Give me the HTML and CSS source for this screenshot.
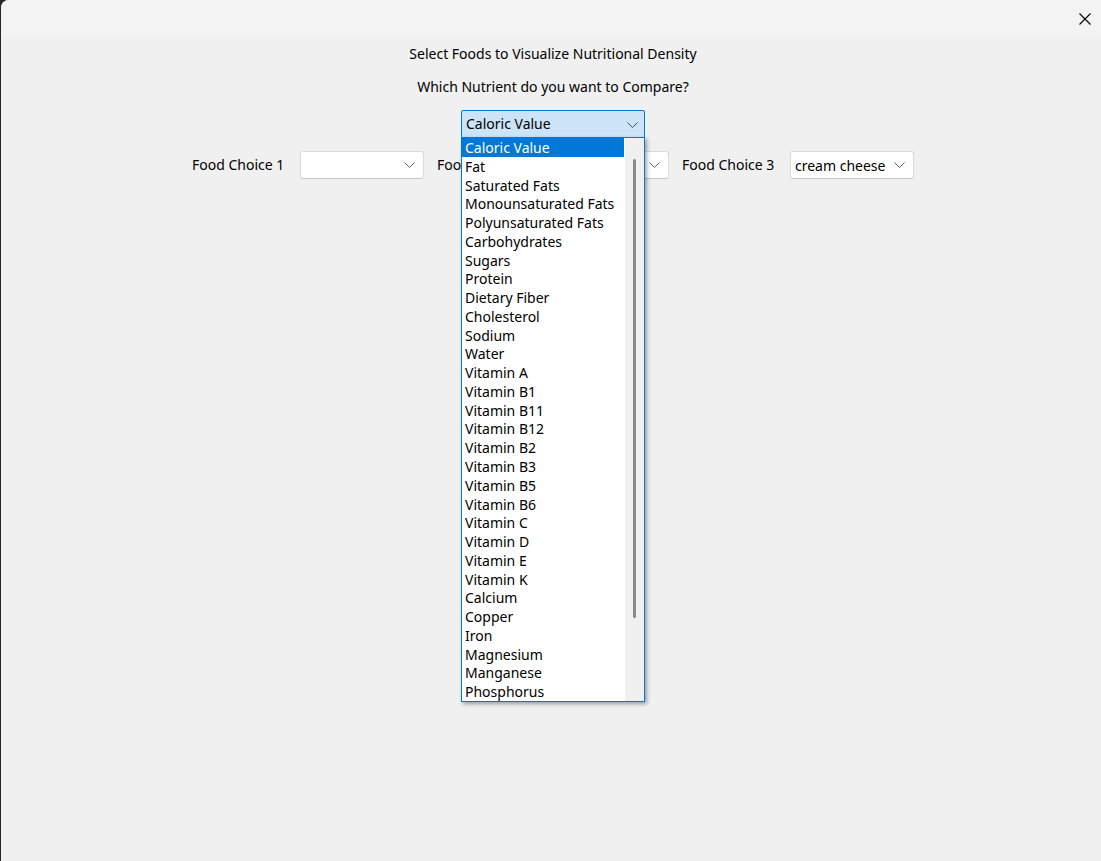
FILE: index.html
```html
<!DOCTYPE html>
<html>
<head>
<meta charset="utf-8">
<link rel="stylesheet" href="styles.css">
</head>
<body>
<div class="window">
  <div class="titlebar">
    <div class="close">
      <svg width="12" height="12" viewBox="0 0 12 12"><path d="M0.5 0.5 L11.5 11.5 M11.5 0.5 L0.5 11.5" stroke="#000" stroke-width="1.1" fill="none"/></svg>
    </div>
  </div>
  <div class="content">
    <div class="heading">Select Foods to Visualize Nutritional Density</div>
    <div class="question">Which Nutrient do you want to Compare?</div>
    <div class="nutrient">
      <span class="value">Caloric Value</span>
      <svg class="chev" width="11" height="6" viewBox="0 0 11 6"><path d="M0.5 0.5 L5.5 5.5 L10.5 0.5" stroke="#505050" stroke-width="1" fill="none"/></svg>
      <div class="list">
        <div class="items">
          <div class="item selected">Caloric Value</div>
          <div class="item">Fat</div>
          <div class="item">Saturated Fats</div>
          <div class="item">Monounsaturated Fats</div>
          <div class="item">Polyunsaturated Fats</div>
          <div class="item">Carbohydrates</div>
          <div class="item">Sugars</div>
          <div class="item">Protein</div>
          <div class="item">Dietary Fiber</div>
          <div class="item">Cholesterol</div>
          <div class="item">Sodium</div>
          <div class="item">Water</div>
          <div class="item">Vitamin A</div>
          <div class="item">Vitamin B1</div>
          <div class="item">Vitamin B11</div>
          <div class="item">Vitamin B12</div>
          <div class="item">Vitamin B2</div>
          <div class="item">Vitamin B3</div>
          <div class="item">Vitamin B5</div>
          <div class="item">Vitamin B6</div>
          <div class="item">Vitamin C</div>
          <div class="item">Vitamin D</div>
          <div class="item">Vitamin E</div>
          <div class="item">Vitamin K</div>
          <div class="item">Calcium</div>
          <div class="item">Copper</div>
          <div class="item">Iron</div>
          <div class="item">Magnesium</div>
          <div class="item">Manganese</div>
          <div class="item">Phosphorus</div>
        </div>
        <div class="scrollbar"><div class="thumb"></div></div>
      </div>
    </div>
    <div class="row">
      <div class="label">Food Choice 1</div>
      <div class="combo"><span class="value"></span><svg width="11" height="6" viewBox="0 0 11 6"><path d="M0.5 0.5 L5.5 5.5 L10.5 0.5" stroke="#606060" stroke-width="1" fill="none"/></svg></div>
      <div class="label">Food Choice 2</div>
      <div class="combo"><span class="value"></span><svg width="11" height="6" viewBox="0 0 11 6"><path d="M0.5 0.5 L5.5 5.5 L10.5 0.5" stroke="#606060" stroke-width="1" fill="none"/></svg></div>
      <div class="label">Food Choice 3</div>
      <div class="combo"><span class="value">cream cheese</span><svg width="11" height="6" viewBox="0 0 11 6"><path d="M0.5 0.5 L5.5 5.5 L10.5 0.5" stroke="#606060" stroke-width="1" fill="none"/></svg></div>
    </div>
  </div>
</div>
</body>
</html>
```
FILE: styles.css
```css
html, body {
  margin: 0;
  height: 100%;
}
body {
  background: #262626;
  font-family: "Noto Sans", "Segoe UI", sans-serif;
  font-size: 14px;
  color: #000;
}
.window {
  margin-left: 1px;
  height: 861px;
  background: #f0f0f0;
  border-top-left-radius: 8px;
  overflow: hidden;
  display: flex;
  flex-direction: column;
}
.titlebar {
  height: 38px;
  background: #f3f3f3;
  display: flex;
  justify-content: flex-end;
}
.close {
  width: 32px;
  display: flex;
  align-items: center;
  justify-content: center;
}
.content {
  flex: 1;
  display: flex;
  flex-direction: column;
  align-items: center;
  padding-left: 4px;
}
.heading {
  margin-top: 6px;
  line-height: 20px;
}
.question {
  margin-top: 13px;
  line-height: 20px;
}
.nutrient {
  margin-top: 13px;
  position: relative;
  box-sizing: border-box;
  width: 184px;
  height: 28px;
  border: 1px solid #0078d7;
  border-radius: 2px 2px 0 0;
  background: #cce4f7;
  display: flex;
  align-items: center;
  justify-content: space-between;
  padding: 0 6px 0 4px;
}
.nutrient .value {
  margin-top: -1px;
}
.nutrient .chev {
  margin-top: 1px;
}
.list {
  position: absolute;
  left: -1px;
  top: 26px;
  box-sizing: border-box;
  width: 184px;
  border: 1px solid #0078d7;
  background: #fff;
  display: flex;
  box-shadow: 2px 2px 4px rgba(0, 0, 0, 0.35);
  z-index: 2;
}
.items {
  flex: 1;
  padding-right: 1px;
}
.item {
  height: 18.77px;
  line-height: 20px;
  padding-left: 3px;
  white-space: nowrap;
}
.item.selected {
  background: #0078d7;
  color: #fff;
}
.scrollbar {
  width: 19px;
  background: #f0f0f0;
  padding-top: 21px;
  padding-left: 8px;
  box-sizing: border-box;
}
.thumb {
  width: 3px;
  height: 459px;
  border-radius: 2px;
  background: #8a8a8a;
}
.row {
  margin-top: 13px;
  display: flex;
  align-items: center;
}
.label {
  width: 95px;
  white-space: nowrap;
  margin-right: 13px;
  padding-bottom: 2px;
}
.combo {
  box-sizing: border-box;
  width: 124px;
  height: 28px;
  border: 1px solid #d9d9d9;
  border-bottom-color: #c6c6c6;
  border-radius: 3px;
  background: #fff;
  display: flex;
  align-items: center;
  justify-content: space-between;
  padding: 0 8px 0 4px;
  margin-right: 13px;
}
.combo:last-child {
  margin-right: 0;
}
```
